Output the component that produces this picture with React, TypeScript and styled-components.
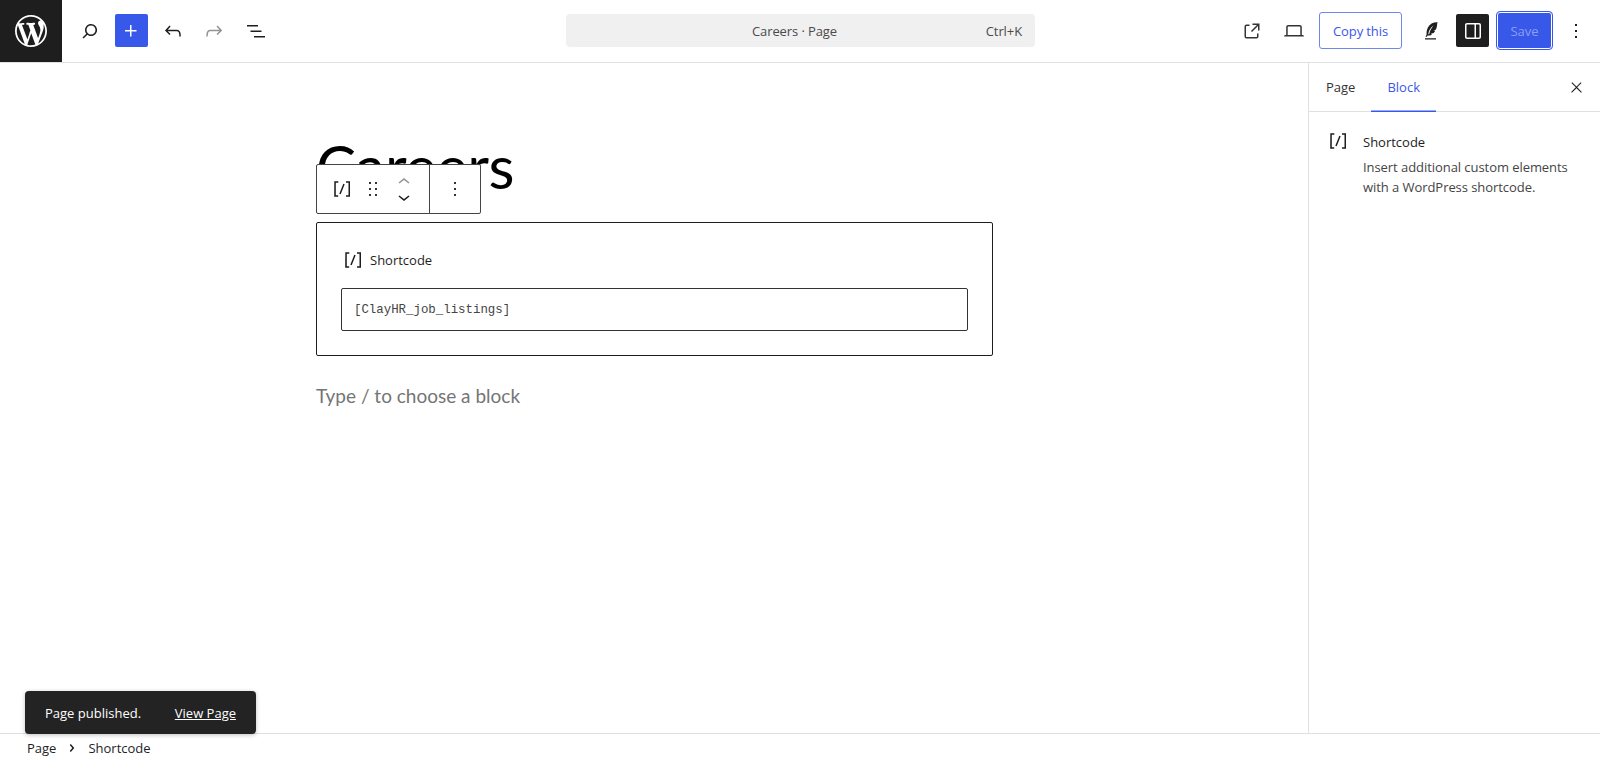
import React from "react";
import styled, { createGlobalStyle } from "styled-components";

const GlobalStyle = createGlobalStyle`
  html, body {
    margin: 0;
    padding: 0;
    background: #fff;
    font-family: "Open Sans", "Noto Sans", sans-serif;
    color: #1e1e1e;
  }
`;

const paths = {
  search: "M13 5c-3.3 0-6 2.7-6 6 0 1.4.5 2.7 1.3 3.7l-3.8 3.8 1.1 1.1 3.8-3.8c1 .8 2.3 1.3 3.7 1.3 3.3 0 6-2.7 6-6S16.3 5 13 5zm0 10.500c-2.500 0-4.500-2-4.500-4.500s2-4.500 4.500-4.500 4.500 2 4.500 4.500-2 4.500-4.500 4.500z",
  plus: "M11 12.5V17.5H12.5V12.5H17.5V11H12.5V6H11V11H6V12.5H11Z",
  undo: "M18.3 11.7c-.6-.6-1.4-.9-2.3-.9H6.7l2.9-3.3-1.1-1-4.5 5L8.5 16l1-1-2.7-2.7H16c.5 0 .9.2 1.3.5 1 1 1 3.4 1 4.5v.3h1.5v-.2c0-1.5 0-4.3-1.5-5.7z",
  redo: "M15.6 6.5l-1.1 1 2.9 3.3H8c-.9 0-1.7.3-2.3.9-1.4 1.5-1.4 4.2-1.4 5.6v.2h1.5v-.3c0-1.1 0-3.5 1-4.5.3-.3.7-.5 1.3-.5h9.2L14.5 15l1.1 1.1 4.6-4.6-4.6-5z",
  list: "M3 6h11v1.5H3V6Zm3.5 5.5h11V13h-11v-1.5ZM21 17H10v1.5h11V17Z",
  external: "M19.5 4.5h-7V6h4.44l-5.97 5.97 1.06 1.06L18 7.06v4.44h1.5v-7Zm-13 1a2 2 0 0 0-2 2v10a2 2 0 0 0 2 2h10a2 2 0 0 0 2-2v-3H17v3a.5.5 0 0 1-.5.5h-10a.5.5 0 0 1-.5-.5v-10a.5.5 0 0 1 .5-.5h3V5.5h-3Z",
  laptop: "M20.5 16h-.7V8c0-1.1-.9-2-2-2H6.2c-1.1 0-2 .9-2 2v8h-.7c-.8 0-1.5.7-1.5 1.5h20c0-.8-.7-1.5-1.5-1.5zM5.7 8c0-.3.2-.5.5-.5h11.6c.3 0 .5.2.5.5v8H5.7V8z",
  feather: "M6 20.600h11V19.200H6v1.400zM18.800 3.400c-4.200-.3-8 1.500-9.900 5.200-1.100 2.200-1.500 4.800-1.300 7.200l-1 1.500 1 .7 1-1.400c1.500.1 3.100-.3 4.400-1.200l-1.200-.6 2.800-.9c.7-.6 1.200-1.300 1.600-2.100l-1.600-.3 2.400-1c.8-1.900 1.100-4.200 1.300-6.600zM9.300 15.200c.3-3.600 2-6.500 5.300-8.800-2.200 2.500-3.800 5.400-4.400 8.800h-.9z",
  sidebar: "M18 4H6c-1.100 0-2 .9-2 2v12c0 1.100.9 2 2 2h12c1.100 0 2-.9 2-2V6c0-1.100-.9-2-2-2zM6 18.500c-.3 0-.5-.2-.5-.5V6c0-.3.2-.5.5-.5h7.500v13H6zm12.500-.5c0 .3-.2.5-.5.5h-3V5.500h3c.3 0 .5.2.5.5v12z",
  shortcode: "M16 4.200v1.500h2.500v12.500H16v1.500h4V4.200h-4zM4.200 19.800h4v-1.500H5.800V5.800h2.500V4.200h-4l-.1 15.600zm5.100-3.100l1.400.6 4-10-1.400-.6-4 10z",
  drag: "M8 7h2V5H8v2zm0 6h2v-2H8v2zm0 6h2v-2H8v2zm6-14v2h2V5h-2zm0 8h2v-2h-2v2zm0 6h2v-2h-2v2z",
  more: "M13 19h-2v-2h2v2zm0-6h-2v-2h2v2zm0-6h-2V5h2v2z",
  close: "M13 11.800l6.100-6.300-1-1-6.100 6.200-6.100-6.200-1 1 6.100 6.300-6.500 6.700 1 1 6.500-6.600 6.500 6.600 1-1z",
  up: "M6.500 12.400L12 8l5.500 4.400-.9 1.200L12 10l-4.500 3.600-1-1.200z",
  down: "M17.500 11.600L12 16l-5.500-4.400.9-1.200L12 14l4.500-3.600 1 1.200z",
  chevron: "M10.862 8.040L14.280 12.029L10.862 16.017L9.723 15.040L12.305 12.029L9.723 9.017L10.862 8.040Z",
  wordpress: "M20 10c0-5.510-4.490-10-10-10C4.480 0 0 4.490 0 10c0 5.520 4.480 10 10 10 5.510 0 10-4.480 10-10zM7.780 15.370L4.370 6.220c.55-.02 1.170-.08 1.170-.08.5-.06.44-1.130-.06-1.110 0 0-1.450.11-2.370.11-.18 0-.37 0-.58-.01C4.120 2.690 6.870 1.110 10 1.110c2.330 0 4.450.87 6.050 2.340-.68-.11-1.650.39-1.650 1.580 0 .74.45 1.360.9 2.100.35.61.55 1.360.55 2.460 0 1.490-1.400 5-1.400 5l-3.030-8.370c.54-.02.82-.17.82-.17.5-.05.44-1.250-.06-1.220 0 0-1.440.12-2.380.12-.87 0-2.330-.12-2.330-.12-.5-.03-.56 1.200-.06 1.220l.92.08 1.260 3.410zM17.410 10c.24-.64.74-1.870.43-4.250.7 1.290 1.050 2.710 1.050 4.250 0 3.290-1.730 6.240-4.400 7.780.97-2.590 1.940-5.200 2.920-7.780zM6.100 18.090C3.120 16.650 1.110 13.530 1.110 10c0-1.300.23-2.480.72-3.590C3.250 10.300 4.670 14.200 6.100 18.090zm4.030-6.630l2.580 6.980c-.86.29-1.760.45-2.710.45-.79 0-1.570-.11-2.290-.33.81-2.380 1.620-4.740 2.420-7.100z",
};

type IconName = keyof typeof paths;

function Icon({ name, size = 24, color = "#1e1e1e" }: { name: IconName; size?: number; color?: string }) {
  const box = name === "wordpress" ? "0 0 20 20" : "0 0 24 24";
  return (
    <svg width={size} height={size} viewBox={box} fill={color} fillRule="evenodd" style={{ display: "block", flex: "none" }}>
      <path d={paths[name]} />
    </svg>
  );
}

export default function App() {
  return (
    <Page>
      <GlobalStyle />
      <Header>
        <LogoTile>
          <Icon name="wordpress" size={32} color="#fff" />
        </LogoTile>
        <LeftTools>
          <ToolButton><Icon name="search" /></ToolButton>
          <InserterButton><Icon name="plus" color="#fff" /></InserterButton>
          <ToolButton><Icon name="undo" /></ToolButton>
          <ToolButton><Icon name="redo" color="#949494" /></ToolButton>
          <ToolButton><Icon name="list" /></ToolButton>
        </LeftTools>
        <CommandBar>
          <CommandTitle>Careers · Page</CommandTitle>
          <Shortcut>Ctrl+K</Shortcut>
        </CommandBar>
        <RightTools>
          <ToolButton><Icon name="external" color="#333" /></ToolButton>
          <ToolButton><Icon name="laptop" color="#333" /></ToolButton>
          <CopyButton>Copy this</CopyButton>
          <ToolButton><Icon name="feather" /></ToolButton>
          <ToggleButton><Icon name="sidebar" color="#fff" /></ToggleButton>
          <SaveButton>Save</SaveButton>
          <ToolButton><Icon name="more" /></ToolButton>
        </RightTools>
      </Header>

      <Main>
        <Canvas>
          <Column>
            <PostTitle>Careers</PostTitle>
            <BlockToolbar>
              <ToolbarGroup>
                <Icon name="shortcode" />
                <Icon name="drag" color="#333" />
                <Movers>
                  <Icon name="up" color="#949494" />
                  <Icon name="down" />
                </Movers>
              </ToolbarGroup>
              <ToolbarEnd><Icon name="more" color="#333" /></ToolbarEnd>
            </BlockToolbar>
            <ShortcodeBlock>
              <BlockLabel>
                <Icon name="shortcode" />
                <span>Shortcode</span>
              </BlockLabel>
              <CodeField>[ClayHR_job_listings]</CodeField>
            </ShortcodeBlock>
            <Placeholder>Type / to choose a block</Placeholder>
          </Column>
        </Canvas>

        <Sidebar>
          <Tabs>
            <Tab>Page</Tab>
            <Tab $active>Block</Tab>
            <CloseSlot><Icon name="close" size={17} /></CloseSlot>
          </Tabs>
          <BlockCard>
            <Icon name="shortcode" />
            <CardText>
              <CardTitle>Shortcode</CardTitle>
              <CardDescription>Insert additional custom elements with a WordPress shortcode.</CardDescription>
            </CardText>
          </BlockCard>
        </Sidebar>
      </Main>

      <Footer>
        <span>Page</span>
        <Icon name="chevron" size={24} />
        <span>Shortcode</span>
      </Footer>

      <Snackbar>
        <span>Page published.</span>
        <SnackLink>View Page</SnackLink>
      </Snackbar>
    </Page>
  );
}

const Page = styled.div`
  position: relative;
  width: 1600px;
  height: 757px;
  overflow: hidden;
  display: flex;
  flex-direction: column;
`;

const Header = styled.header`
  height: 63px;
  box-sizing: border-box;
  padding-bottom: 1px;
  display: flex;
  align-items: center;
  border-bottom: 1px solid #e0e0e0;
  flex: none;
`;

const LogoTile = styled.div`
  width: 62px;
  height: 62px;
  align-self: flex-start;
  background: #1e1e1e;
  display: flex;
  align-items: center;
  justify-content: center;
  flex: none;
`;

const LeftTools = styled.div`
  display: flex;
  align-items: center;
  gap: 8.5px;
  margin-left: 11px;
  width: 493px;
  flex: none;
`;

const ToolButton = styled.div`
  width: 33px;
  height: 33px;
  display: flex;
  align-items: center;
  justify-content: center;
  flex: none;
`;

const InserterButton = styled(ToolButton)`
  background: #3858e9;
  border-radius: 2px;
`;

const CommandBar = styled.div`
  width: 469px;
  height: 33px;
  flex: none;
  background: #f0f0f0;
  border-radius: 4px;
  display: flex;
  align-items: center;
  justify-content: center;
  position: relative;
  font-size: 13px;
  letter-spacing: -0.1px;
  color: #4a4a4a;
`;

const CommandTitle = styled.span`
  margin-left: -12px;
`;

const Shortcut = styled.span`
  position: absolute;
  right: 13px;
  top: 8px;
  line-height: 18px;
`;

const RightTools = styled.div`
  flex: 1;
  display: flex;
  align-items: center;
  justify-content: flex-end;
  gap: 9px;
  padding-right: 8px;
`;

const CopyButton = styled.div`
  box-sizing: border-box;
  width: 83px;
  height: 37px;
  margin-right: 3px;
  border: 1px solid #6f86ee;
  border-radius: 3px;
  color: #3858e9;
  font-size: 13px;
  letter-spacing: -0.1px;
  display: flex;
  align-items: center;
  justify-content: center;
`;

const ToggleButton = styled(ToolButton)`
  background: #1e1e1e;
  border-radius: 2px;
  margin-right: -1px;
`;

const SaveButton = styled.div`
  box-sizing: border-box;
  width: 55px;
  height: 37px;
  background: #3858e9;
  border-radius: 3px;
  box-shadow: inset 0 0 0 1px #fff;
  outline: 1.5px solid #3858e9;
  color: #8c9ef3;
  font-size: 13px;
  display: flex;
  align-items: center;
  justify-content: center;
  margin-right: -2px;
`;

const Main = styled.main`
  flex: 1;
  display: flex;
  min-height: 0;
`;

const Canvas = styled.div`
  flex: 1;
  padding-top: 61px;
  padding-left: 316px;
`;

const Column = styled.div`
  position: relative;
  width: 677px;
`;

const PostTitle = styled.h1`
  margin: 0;
  font-family: "Lato", "Open Sans", sans-serif;
  font-size: 60px;
  letter-spacing: -0.5px;
  font-weight: 400;
  line-height: 84px;
  height: 98px;
  color: #000;
`;

const BlockToolbar = styled.div`
  position: absolute;
  left: 0;
  top: 40px;
  box-sizing: border-box;
  width: 165px;
  height: 50px;
  display: flex;
  background: #fff;
  border: 1px solid #444;
  border-radius: 2px;
`;

const ToolbarGroup = styled.div`
  width: 113px;
  flex: none;
  display: flex;
  align-items: center;
  gap: 7px;
  padding-left: 13px;
  box-sizing: border-box;
  border-right: 1px solid #444;
`;

const Movers = styled.div`
  display: flex;
  flex-direction: column;

  svg + svg {
    margin-top: -9px;
  }
`;

const ToolbarEnd = styled.div`
  flex: 1;
  display: flex;
  align-items: center;
  justify-content: center;
`;

const ShortcodeBlock = styled.div`
  box-sizing: border-box;
  height: 134px;
  border: 1px solid #1e1e1e;
  border-radius: 2px;
  padding: 25px 24px 0;
`;

const BlockLabel = styled.div`
  display: flex;
  align-items: center;
  gap: 5px;
  height: 24px;
  font-size: 13px;
  font-weight: 500;
  color: #1e1e1e;
  margin-bottom: 16px;
`;

const CodeField = styled.div`
  box-sizing: border-box;
  height: 43px;
  border: 1px solid #333;
  border-radius: 2px;
  padding: 0 12px;
  display: flex;
  align-items: center;
  font-family: "Liberation Mono", "DejaVu Sans Mono", monospace;
  font-size: 12.4px;
  color: #444;
`;

const Placeholder = styled.p`
  margin: 26px 0 0;
  font-family: "Lato", "Open Sans", sans-serif;
  font-size: 19px;
  line-height: 28px;
  color: #757575;
`;

const Sidebar = styled.aside`
  width: 292px;
  flex: none;
  box-sizing: border-box;
  border-left: 1px solid #e0e0e0;
`;

const Tabs = styled.div`
  height: 49px;
  box-sizing: border-box;
  border-bottom: 1px solid #e0e0e0;
  display: flex;
`;

const Tab = styled.div<{ $active?: boolean }>`
  height: 49px;
  padding: 0 16px 2px;
  margin-left: ${(p) => (p.$active ? "0" : "1px")};
  display: flex;
  align-items: center;
  font-size: 13px;
  color: ${(p) => (p.$active ? "#3858e9" : "#333")};
  box-shadow: ${(p) => (p.$active ? "inset 0 -1.5px 0 #3858e9" : "none")};
  box-sizing: border-box;
`;

const CloseSlot = styled.div`
  margin-left: auto;
  margin-right: 15px;
  display: flex;
  align-items: center;
`;

const BlockCard = styled.div`
  display: flex;
  gap: 13px;
  padding: 17px 16px 0 17px;
`;

const CardText = styled.div`
  width: 215px;
`;

const CardTitle = styled.div`
  font-size: 13px;
  font-weight: 500;
  line-height: 24px;
  color: #1e1e1e;
  margin-top: 1px;
`;

const CardDescription = styled.div`
  font-size: 13px;
  letter-spacing: -0.06px;
  line-height: 19.5px;
  color: #444;
  margin-top: 4px;
`;

const Footer = styled.footer`
  height: 24px;
  flex: none;
  box-sizing: border-box;
  border-top: 1px solid #e0e0e0;
  background: #fff;
  padding: 5px 0 0 27px;
  display: flex;
  align-items: center;
  gap: 4px;
  font-size: 13px;
  color: #1e1e1e;
`;

const Snackbar = styled.div`
  position: absolute;
  left: 25px;
  top: 691px;
  box-sizing: border-box;
  width: 231px;
  height: 43px;
  padding: 0 20px;
  background: #232323;
  border-radius: 4px;
  box-shadow: 0 1px 4px rgba(0, 0, 0, 0.25);
  display: flex;
  align-items: center;
  justify-content: space-between;
  font-size: 13px;
  font-weight: 500;
  color: #fff;
`;

const SnackLink = styled.span`
  text-decoration: underline;
`;
